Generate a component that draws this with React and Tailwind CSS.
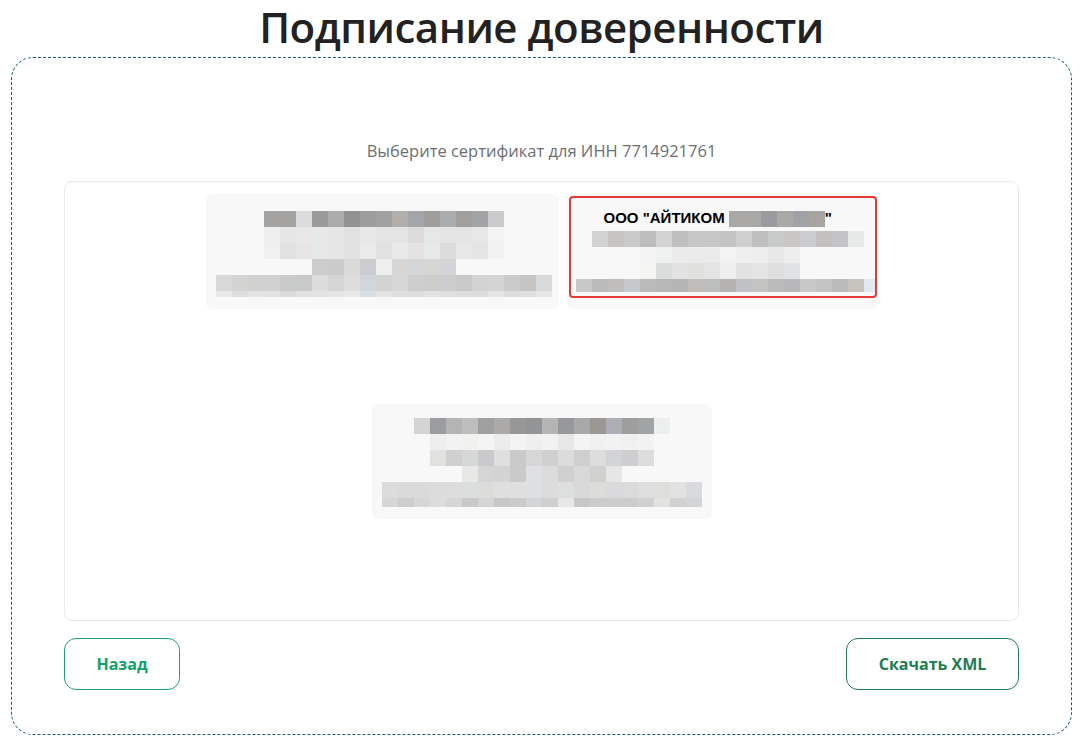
import React from 'react';

const cardOne = [
  { left: 58, h: 16, cells: ['#a5a3a1','#a5a3a1','#dcdcde','#9a9a9a','#abacae','#929292','#9c9d9f','#a0a1a0','#b2aeab','#a3a5aa','#9f9e9c','#abacae','#a29e9c','#a2a3a5','#cbcbcd'] },
  { left: 58, h: 16, cells: ['#efefef','#e6e6e6','#e9e8e7','#e7e8e8','#e6e6e6','#e1e1e1','#e7e8e8','#e4e4e5','#e4e4e5','#dcdadb','#e6e7e7','#e4e4e5','#e4e4e5','#e6e7e9','#f3f3f3'] },
  { left: 58, h: 16, cells: ['#f0f0f0','#e1e1e1','#e7e5e5','#e6e7e7','#e6e6e6','#e1e1e1','#e9eae9','#e1e1e1','#e9e9e9','#e4e2e3','#e8e9eb','#dcdcdc','#e6e7e7','#e4e4e4','#f1f2f2'] },
  { left: 106, h: 16, cells: ['#cdcdcd','#cbcbcb','#dadad9','#cbcccf','#efefef','#d7d6d5','#d4d5d8','#d5d5d3','#d3d4d7'] },
  { left: 10, h: 16, cells: ['#d8d8d8','#d3d3d1','#d1d1d0','#d1d1d1','#c9cbcb','#c8cac9','#dcdcda','#d5d5d5','#dedddb','#d2d6da','#d3d3d3','#d7d7d7','#cecece','#cdcdcc','#cccdcf','#c9c9ca','#d3d3d3','#d4d4d4','#cbcbcb','#c6c5c3','#d9dadc'] },
  { left: 10, h: 6, cells: ['#e8e8e6','#dcdedf','#e4e4e4','#e1e2e4','#dcdadb','#e0e1e3','#e2e2e2','#e4e4e4','#e8e8e6','#d9dce0','#e4e4e4','#dfdfdf','#dcdde0','#e2e2e2','#e0dfe0','#dedede','#dcdde0','#e4e4e4','#dbdbdb','#e0e0de','#e6e8e8'] },
];

const cardTwo = [
  { left: 21, h: 16, cells: ['#d3d3d3','#c6c5c3','#c9cac9','#bdbdbd','#d3d3d3','#bfbfbf','#c6c6c6','#c6c6c6','#c4c4c4','#cfcfcf','#bfbfbf','#c8c9c9','#c9c7c5','#cbcccf','#c3c1bf','#c4c4c8','#e7e8e8'] },
  { left: 69, h: 16, cells: ['#f4f4f4','#eff0f0','#ebebeb','#ebebeb','#eaeaea','#f3f3f3','#efefef','#ededed','#e8e8e8','#eeeeee'] },
  { left: 69, h: 16, cells: ['#f5f5f4','#dbdcdc','#e2e2e2','#e0e0df','#e4e4e4','#efefef','#e1e1e1','#e4e4e4','#dedede','#e1e2e4'] },
  { left: 5, h: 13, cells: ['#c8c8c8','#bbbbbb','#bfbebd','#c6c9cb','#bababa','#b7b7b7','#b5b5b5','#c0bcb9','#bcbebd','#b4b3b1','#c0c1c4','#c3c3c2','#bbbbbb','#b8b8ba','#c8c8c8','#c4c4c4','#bbbbbb','#c7c4c0','#e1e8f0'] },
];

const cardThree = [
  { left: 42, h: 16, cells: ['#d5d4d2','#9c9da0','#b3b5b4','#c0bebc','#9fa0a2','#abaaa8','#999795','#939496','#b5b5b5','#97989b','#a9a9a9','#9a9795','#abafb5','#a09e9c','#a1a4a5','#eef0ef'] },
  { left: 58, h: 16, cells: ['#eeeeee','#f1f2f1','#f1f1f0','#f4f4f4','#ececec','#f4f4f4','#efefef','#f2f2f2','#e8e8e8','#f4f4f4','#eff0ef','#f2f2f3','#f0f0f0','#f2f2f2'] },
  { left: 58, h: 16, cells: ['#e1e1e0','#d1cfd0','#d6d8d7','#cacacc','#dfdfdf','#cacaca','#d7d7d7','#d0d0d0','#dcdcdc','#cfcfcf','#dddddd','#d3d4d7','#cecdcf','#dcdddc'] },
  { left: 90, h: 16, cells: ['#e8e8e7','#d5d5d5','#d3d3d3','#cacac8','#dfe0e3','#dcdcdc','#d0d0d0','#d8d8d8','#d1d1cf','#e6e6e6'] },
  { left: 10, h: 16, cells: ['#dcdcdc','#dadada','#dadada','#dcdcdc','#dddddd','#dadedc','#dcdcda','#dfdfdf','#dedfde','#dedfe2','#dcdcdc','#dddfdf','#d9d9d9','#dcdcd9','#dadadc','#dbdbdb','#dedede','#dededb','#e2e2e1','#d9dadd'] },
  { left: 10, h: 9, cells: ['#d6d6d6','#cecece','#d6d7d9','#dcdcda','#d6d6d6','#cbc9c7','#d5d5d8','#c8c8c8','#cbcbcb','#d4d5d8','#cfcfcf','#e6e8e8','#c8c7c5','#cccccc','#cccccc','#cccccc','#d0d1d3','#e2e2df','#d1d1d1','#d4d5d8'] },
];

const hiddenName = ['#aaa8a6','#aaa8a6','#9a9b9e','#aaa8a6','#a0a2a8','#a8a4a0'];

function Mosaic({ rows }) {
  return (
    <div className="flex flex-col">
      {rows.map((row, i) => (
        <div key={i} className="flex" style={{ paddingLeft: row.left }}>
          {row.cells.map((c, j) => (
            <div key={j} className="w-[16px] shrink-0" style={{ height: row.h, backgroundColor: c }} />
          ))}
        </div>
      ))}
    </div>
  );
}

export default function App() {
  return (
    <div className="min-h-[745px] bg-white font-['Open_Sans','Noto_Sans',sans-serif] text-[#222]">
      <h1 className="h-[57px] pt-[1px] text-center text-[42px] font-semibold leading-[52px] tracking-[-0.5px]">
        Подписание доверенности
      </h1>

      <div className="mx-[11px] w-[1061px] h-[678px] rounded-[22px] border border-dashed border-[#1c5b6e] px-[52px] pt-[82px]">
        <p className="text-center text-[16.5px] leading-[22px] text-[#6b6f75]">
          Выберите сертификат для ИНН 7714921761
        </p>

        <div className="mt-[19px] h-[440px] rounded-[8px] border border-[#e6e9ee] pt-[12px]">
          <div className="flex flex-wrap justify-center gap-x-[8px] gap-y-[95px]">
            <div className="w-[353px] h-[115px] rounded-[6px] bg-[#f8f8f8] pt-[17px]">
              <Mosaic rows={cardOne} />
            </div>

            <div className="w-[311px] h-[115px] rounded-[6px] bg-[#f8f8f8] pt-[2px] pl-[2px]">
              <div className="w-[308px] h-[102px] overflow-hidden rounded-[4px] border-2 border-[#e53935] pt-[8px]">
                <div className="flex items-center pl-[33px] h-[25px] font-['Liberation_Sans',Arial,sans-serif] text-[15px] font-bold text-black">
                  <span>ООО "АЙТИКОМ&nbsp;</span>
                  <span className="flex">
                    {hiddenName.map((c, i) => (
                      <span key={i} className="w-[16px] h-[16px]" style={{ backgroundColor: c }} />
                    ))}
                  </span>
                  <span>"</span>
                </div>
                <Mosaic rows={cardTwo} />
              </div>
            </div>

            <div className="w-[340px] h-[115px] rounded-[6px] bg-[#f8f8f8] pt-[14px]">
              <Mosaic rows={cardThree} />
            </div>
          </div>
        </div>

        <div className="mt-[17px] flex justify-between">
          <button className="w-[116px] h-[52px] rounded-[12px] border border-[#1ea36c] bg-white text-[16px] font-bold text-[#11a06a]">
            Назад
          </button>
          <button className="w-[173px] h-[52px] rounded-[12px] border border-[#1f7d52] bg-white text-[16px] font-bold text-[#1e7d50]">
            Скачать XML
          </button>
        </div>
      </div>
    </div>
  );
}
